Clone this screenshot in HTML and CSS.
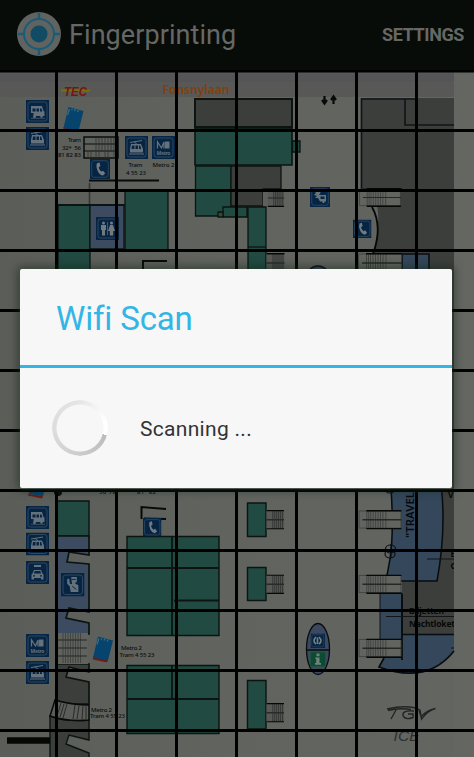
FILE: index.html
```html
<!DOCTYPE html>
<html lang="en">
<head>
<meta charset="utf-8">
<title>Fingerprinting</title>
<link rel="stylesheet" href="styles.css">
</head>
<body>
<header class="bar">
  <svg class="logo" viewBox="0 0 44 44">
    <circle cx="22" cy="22" r="22" fill="#60635f"/>
    <g fill="none" stroke="#195c79" stroke-width="2">
      <circle cx="22" cy="22" r="15"/>
      <path d="M22 1v6M22 37v6M1 22h6M37 22h6" stroke-width="2.4"/>
    </g>
    <circle cx="22" cy="22" r="8.5" fill="#124b64"/>
  </svg>
  <h1 class="title">Fingerprinting</h1>
  <button class="settings">SETTINGS</button>
</header>
<main>
<svg class="map" viewBox="0 70 474 687">
  <defs>
    <linearGradient id="paper"><stop offset="0" stop-color="#5b5d59"/><stop offset=".45" stop-color="#61635f"/><stop offset="1" stop-color="#636561"/></linearGradient>
    <symbol id="box" viewBox="0 0 23 23"><path fill="#062443" d="M0 0h23v23H0z"/><rect x="2" y="2" width="19" height="19" rx="2.5" fill="none" stroke="#3b5266" stroke-width=".8"/></symbol>
    <symbol id="bus" viewBox="0 0 23 23"><use href="#box"/><path fill="#65717b" d="M5 6h11l1.500 5 1 .5V16h-11v-3H5z"/><path fill="#062443" d="M6.500 8.500h3v3h-3zm4 0h2.500v3h-2.500zm3.500 0h1.500l.8 3H14z"/><circle cx="8.500" cy="16.500" r="1.500" fill="#65717b"/><circle cx="15.500" cy="16.500" r="1.200" fill="#65717b"/><path d="M5 18.300h14" stroke="#65717b" stroke-width=".6"/></symbol>
    <symbol id="tram" viewBox="0 0 23 23"><use href="#box"/><path d="M5 6.500L17 4.500M9 5.800l3 2.500" stroke="#65717b" stroke-width="1"/><path fill="#65717b" d="M6 8h10l2 5v3.500H5V13z"/><path fill="#062443" d="M7 9.500h2.500V13H6.500zm3.500 0H13V13h-2.500zm3.500 0h1.200l1 3.500H14z"/><path d="M4 18h15" stroke="#65717b"/></symbol>
    <symbol id="metro" viewBox="0 0 23 23"><use href="#box"/><path d="M5.500 12.500V6l4 6 2.500-6v6.500" fill="none" stroke="#65717b" stroke-width="1.300"/><path fill="#65717b" d="M13 5.500h4.500v7H13z"/><text x="4.500" y="18.500" font-size="5" font-weight="700" fill="#65717b" textLength="14">Metro</text></symbol>
    <symbol id="phone" viewBox="0 0 23 23"><use href="#box"/><path fill="#727b80" d="M8 5l3-1 1 4-2 1.500q.5 3 3 5l2-1 2.500 3-2.500 2.500q-4-.5-6-5Q6.500 9 8 5z"/></symbol>
    <symbol id="taxi" viewBox="0 0 23 23"><use href="#box"/><path fill="#65717b" d="M8 4h7v2H8zM8 9h7l1.500 3.500 1 1v5H15V17H8v1.500H5.500v-5l1-1z"/><path fill="#062443" d="M8.800 10h5.400l1 2.500H7.800zM7 14.200h2v1.200H7zm7 0h2v1.200h-2z"/></symbol>
    <symbol id="guard" viewBox="0 0 23 23"><use href="#box"/><path fill="#65717b" d="M10 4h5.500v4.500L13.500 10l3.500 2v6.500H9.500L8.500 13 6 10.500 6 6l2-.5.7 5L11 11l-.5-2z"/><path d="M11 13l4 3M10.500 6.300h4" stroke="#062443" stroke-width=".9"/></symbol>
    <symbol id="wc" viewBox="0 0 23 23"><use href="#box"/><g fill="#737a7d"><circle cx="7.500" cy="6" r="1.500"/><path d="M5 8h5v5H9v5.500H6V13H5z"/><circle cx="15.500" cy="6" r="1.500"/><path d="M14 8h3l2 6h-1.800v4.500h-3.400V14H12z"/></g><path d="M11.500 5v13" stroke="#65717b" stroke-width=".7"/></symbol>
    <symbol id="shuttle" viewBox="0 0 20 20"><use href="#box" width="20" height="20"/><path fill="#69747b" d="M4 4l3-1 1 2 2-1 .5 2L9 8h7v6.500h-1.500V16h-2v-1.500H10L8 11H5l2-2-3-1 2-2z"/><path d="M10.500 9.500h4v2.500h-4z" fill="#062443"/></symbol>
    <symbol id="steps" viewBox="0 0 18 20"><path fill="#575957" d="M0 0h18v20H0z"/><path d="M6.500 1v18M8.500 1v18M10.500 1v18M12.500 1v18M14.500 1v18M16.500 1v18" stroke="#2b2d2b" stroke-width=".8"/><path d="M0 10h18" stroke="#282b28" stroke-width="1.300"/><path d="M0 .7h18M0 19.300h18" stroke="#060806" stroke-width="1.400"/></symbol>
    <symbol id="stairs" viewBox="0 0 44 20"><path fill="#626460" stroke="#3c3e3c" stroke-width=".8" d="M.5 1h43v17.500H.5z"/><path d="M8.500 1v18M10.500 1v18M12.500 1v18M15 1v18M17.500 1v18M20 1v18M22.500 1v18M25 1v18M28 1v18" stroke="#343634" stroke-width=".7"/><path d="M4 10h40" stroke="#242824" stroke-width="1.300"/><path d="M8 .8h36M8 19.200h36" stroke="#060806" stroke-width="1.500"/></symbol>
    <symbol id="ticket" viewBox="0 0 22 26"><path fill="#6c1c17" d="M1 20l15 3-1 3L1 23z"/><path fill="#06446e" d="M6 0l15 4-5 20-15-3z"/><path d="M5 8l2-6M9 3l1-1M12 4l1-2M15 5l1-2" stroke="#397084" stroke-width="1.200"/></symbol>
  </defs>
  <path fill="url(#paper)" d="M0 70h474v687H0z"/>
  <path fill="#585957" d="M0 72h454v25H0z"/>
  <path fill="#555558" d="M0 74h454v8H0z"/>
  <path fill="#646662" d="M454 72h20v685h-20z"/>

  <!-- upper concourse -->
  <g stroke="#0b1411" stroke-width="1.300" fill="#214a42">
    <path fill="#3c3e3b" stroke-width="2" d="M195 99h97v28h-97z"/>
    <path stroke-width="1.600" d="M195 128h97v37h-97z"/>
    <path d="M292.500 141h7.500v11h-7.500z"/>
    <path d="M195.500 166H231v50h-35.500z"/>
    <path fill="#3c3e3b" d="M231 166h50v23h-18v17h-32z"/>
    <path d="M223 207h24v10h-24zM248 207h18v100h-18z"/>
    <path d="M218 212h5v5h-5z" fill="#304b35"/>
    <path d="M248 247h18"/>
    <path d="M58 205h32v90H58zM125 190h43v60h-43z"/>
    <path fill="#3c4b5f" d="M90 205h34v44H90z"/>
    <path d="M58 205h67" stroke-width="2.200"/>
  </g>
  <path fill="#3c3e3b" d="M361 98h93v400h-54V300h-39z"/>
  <path d="M361.500 190V99H418M405 99v26h49M361 189h41" fill="none" stroke="#10131a" stroke-width="1.600"/>
  <path fill="#61635f" d="M358 190h14.500q11.500 26 0 63v40H358z"/>
  <path d="M372 207q11 20 1 47" fill="none" stroke="#060806" stroke-width="1.800"/>
  <path d="M402 254h27v40h-27z" fill="#34475b" stroke="#080b10" stroke-width="1.500"/>
  <path fill="#5d605d" d="M263 189h18v17h-18z"/>
  <use href="#steps" x="267" y="189" width="18" height="18"/>
  <use href="#steps" x="266" y="253" width="19" height="20"/>
  <use href="#stairs" x="358" y="188" width="44" height="19"/>
  <use href="#stairs" x="358" y="253" width="44" height="20"/>
  <ellipse cx="318" cy="279" rx="12" ry="13" fill="#34475b" stroke="#0a0d12" stroke-width="1.300"/>
  <path d="M89 180.500h70M143 270v-9h24" fill="none" stroke="#080a08" stroke-width="2"/>
  <path d="M89.500 183v21" stroke="#343634" stroke-width="1.600"/>
  <path fill="#5f615d" stroke="#0a0c0a" stroke-width="1.500" d="M84 137h34v21H84z"/>
  <path d="M84 144h33M84 151h33" stroke="#0b0d0b"/>
  <path d="M96 138v20M99 138v20M102 138v13M105 138v20M108 138v20M111 138v13M114 138v20M88 151v7M91 151v7" stroke="#303230" stroke-width=".8"/>

  <path d="M61 90.500h29" stroke="#777008" stroke-width="2.200"/>
  <text x="64" y="95.500" class="tec" textLength="23" lengthAdjust="spacingAndGlyphs">TEC</text>
  <text x="162.500" y="94" class="street" textLength="67" lengthAdjust="spacingAndGlyphs">Fonsnylaan</text>
  <path d="M324.500 96v7M322 100l2.500 3.500 2.500-3.500M333.500 104v-7M331 100l2.500-3.500 2.500 3.500" fill="none" stroke="#080a08" stroke-width="2.200"/>
  <svg x="62.500" y="107" width="24" height="22"><use href="#ticket" width="22" height="26"/></svg>
  <use href="#bus" x="26" y="100" width="23" height="23"/>
  <use href="#tram" x="26" y="127" width="23" height="23"/>
  <use href="#tram" x="125" y="136" width="23" height="23"/>
  <use href="#metro" x="152" y="136" width="23" height="23"/>
  <use href="#phone" x="90" y="159" width="20" height="20"/>
  <use href="#wc" x="96" y="217" width="23" height="23"/>
  <use href="#shuttle" x="310" y="187" width="20" height="20"/>
  <use href="#phone" x="353" y="219.500" width="18.500" height="18.500"/>
  <g class="label">
    <text x="68" y="142" textLength="13">Tram</text>
    <text x="62" y="149.500" textLength="19" xml:space="preserve">32*  56</text>
    <text x="58" y="156.500" textLength="23">81 82 83</text>
    <text x="128.500" y="167" textLength="14">Tram</text>
    <text x="126" y="175" textLength="20">4 55 23</text>
    <text x="152.500" y="167" textLength="22">Metro 2</text>
    <text x="99" y="494" textLength="17">30 78</text>
    <text x="137" y="493.500" textLength="19" xml:space="preserve">81  82</text>
    <text x="121" y="650" textLength="21">Metro 2</text>
    <text x="119.500" y="656.500" textLength="35">Tram 4 55 23</text>
    <text x="91" y="711.500" textLength="21">Metro 2</text>
    <text x="90" y="718" textLength="35">Tram 4 55 23</text>
  </g>

  <!-- lower concourse -->
  <g stroke="#0b1411" stroke-width="1.400" fill="#214a42">
    <path d="M57 501h32v35H57z"/>
    <path d="M127 536.500h92v99h-92zM127 665.500h92v68h-92z"/>
    <path d="M127 568h92M172 537v98M174 600.500h45M127 699h92M172 666v32" stroke-width="1.800"/>
    <path d="M247.500 503H266v33.500h-18.500zM247.500 567.500H266v33h-18.500zM247.500 680.500H266V729h-18.500z"/>
    <path fill="#3c4b5f" stroke-width="1.700" d="M57 536h32v19l-20-3-2 10 22 2v48l-20-4-3 10 23 5v11H57z"/>
    <path fill="#3c3e3b" stroke-width="1.700" d="M57 664h32v8l-20-5-3 10 23 5v22q-19 1-32-3z"/>
    <path fill="#3c3e3b" d="M50 716q15 6 39 4v20l-20-5-3 9 23 9v10H50z"/>
  </g>
  <path fill="#60625e" d="M57 633h31v31H57z"/>
  <path d="M63 633v30M65.500 633v30M68 633v30M70.500 633v30M73 633v30M75.500 633v30M78 633v30M80.500 633v30" stroke="#3b3d3b" stroke-width=".8"/>
  <path d="M58 640h29M58 648h29M58 656h29" stroke="#242624" stroke-width="1.200"/>
  <path d="M55 700l-5 16q18 6 39 4v-15q-18 0-34-5z" fill="#5b5d5a" stroke="#080a08" stroke-width="1.500"/>
  <path d="M61 703l-4 13M64 704l-4 13M67 704l-4 14M75 705l-2 14M79 706l-2 13M83 706l-1 13M86 706v13" stroke="#1c1e1c" stroke-width=".8"/>
  <path d="M7 740.500h43" stroke="#060806" stroke-width="6.500"/>
  <use href="#steps" x="266" y="510" width="18.500" height="19.500"/>
  <use href="#steps" x="266" y="574.500" width="18.500" height="19.500"/>
  <use href="#steps" x="266" y="703" width="18.500" height="19.500"/>
  <path d="M141.500 519v-12l24.500 2M144 518.500l22 .5" fill="none" stroke="#080a08" stroke-width="2"/>
  <path fill="#06446e" d="M28 488h17l-2 8-14-2z"/><path fill="#6c1c17" d="M28 494l15 2-1 2.500-14-3z"/>
  <circle cx="58" cy="492" r="4" fill="#080a08"/>
  <use href="#bus" x="26" y="506" width="23" height="23"/>
  <use href="#tram" x="26" y="532.500" width="23" height="23"/>
  <use href="#taxi" x="26" y="561" width="23" height="23"/>
  <use href="#guard" x="61" y="573" width="23.500" height="23.500"/>
  <use href="#metro" x="26" y="634" width="23" height="23"/>
  <use href="#tram" x="26" y="661" width="23" height="23"/>
  <use href="#phone" x="143" y="518" width="18.500" height="18.500"/>
  <use href="#ticket" x="92" y="636.500" width="22" height="26"/>
  <ellipse cx="318" cy="649" rx="11.500" ry="25.500" fill="#3a495f" stroke="#0a0c0e" stroke-width="1.300"/>
  <use href="#box" x="310.500" y="633.500" width="14.500" height="14.500"/>
  <path d="M316 637q-4 4 0 7M319 637q4 4 0 7M317.500 637.500v6.500" fill="none" stroke="#78817f" stroke-width="1.600"/>
  <path d="M306.500 650h23" stroke="#0a0c0e" stroke-width="1.500"/>
  <path fill="#0d4a33" stroke="#24583f" stroke-width=".7" d="M310.500 652h15v14.500h-15z"/>
  <path fill="#72817a" d="M316.500 653.500h3v2.700h-3zM315.500 657.500h4v5.500h1.500v1.700h-6V663h1.200v-4h-1z"/>

  <!-- travel centre -->
  <path fill="#3c3e3b" d="M402 488h52v148h-52z"/>
  <path d="M391 488q3 45-1 71l-4 22h51q9-48 4.500-93z" fill="#34475b" stroke="#080b10" stroke-width="1.500"/>
  <path d="M380 593h22v47h-22z" fill="#34475b" stroke="#101318"/>
  <path d="M454 651q-27 34-75 16l5-9h18v-23h52z" fill="#34475b"/>
  <path d="M454 651q-27 34-75 16l5-9M402 634.500h52" fill="none" stroke="#080b10" stroke-width="1.700"/>
  <path d="M402 594v66" stroke="#080a08" stroke-width="1.700"/>
  <use href="#stairs" x="358" y="510" width="44" height="19.500"/>
  <use href="#stairs" x="358" y="574.500" width="44" height="19.500"/>
  <use href="#stairs" x="358" y="638.500" width="44" height="19.500"/>
  <path d="M427 559h27M386 616.500h68M451 648h3" stroke="#11151a" stroke-width="1.200"/>
  <g fill="none" stroke="#0c1016" stroke-width="1.200"><ellipse cx="390.500" cy="549" rx="5" ry="4"/><ellipse cx="390" cy="554" rx="5" ry="4"/><path d="M391 544v14"/><ellipse cx="390" cy="489" rx="5" ry="4"/></g>
  <text class="travel" transform="translate(414 538) rotate(-90)" textLength="46" lengthAdjust="spacingAndGlyphs">"TRAVEL</text>
  <svg x="402" y="480" width="52" height="160" viewBox="402 480 52 160" class="booth">
    <text x="448" y="498">V</text><text x="450.500" y="557">B</text><text x="450.500" y="569">C</text>
    <text x="409" y="614" textLength="35">Biljetten</text>
    <text x="409" y="626.500" textLength="46">Nachtloket</text>
  </svg>
  <path d="M388 710.500q11-3 23-1M396 710l-5 9M414 711q-12-1-11 4.500 2 5 10 2v-3.500h-5M387 709q22-5 33 1l1.500 9q7-9 14-10.500-7 1-14.500 8l-2-6" fill="none" stroke="#222523" stroke-width="1.400"/>
  <text x="393.500" y="741" class="ice" textLength="26">ICE</text>

  <!-- measuring grid -->
  <path d="M56.500 70v687M116.500 70v687M176.500 70v687M236.500 70v687M296.500 70v687M356.500 70v687M416.500 70v687M0 71h474M0 130.500h474M0 190.500h474M0 250.500h474M0 310.500h474M0 370.500h474M0 430.500h474M0 490.500h474M0 550.500h474M0 610.500h474M0 670.500h474M0 730.500h474" stroke="#000" stroke-width="3"/>
</svg>
</main>
<section class="dialog" role="dialog">
  <h2 class="heading">Wifi Scan</h2>
  <div class="body">
    <div class="spinner"></div>
    <p class="message">Scanning ...</p>
  </div>
</section>
</body>
</html>
```
FILE: styles.css
```css
* { box-sizing: border-box; }
body {
  margin: 0;
  width: 474px;
  height: 757px;
  overflow: hidden;
  position: relative;
  background: #646662;
  font-family: Roboto, "Liberation Sans", sans-serif;
}
.bar {
  height: 70px;
  display: flex;
  align-items: center;
  padding: 0 10px 2px 17px;
  background: #080c08;
}
.logo { width: 44px; height: 44px; }
.title {
  margin: 2px 0 0 8px;
  font-size: 27px;
  font-weight: 400;
  line-height: 36px;
  letter-spacing: .07px;
  color: #666866;
}
.settings {
  margin: 0 0 0 auto;
  padding: 0;
  border: 0;
  background: none;
  font: 700 18px Roboto, "Liberation Sans", sans-serif;
  letter-spacing: -.4px;
  color: #666866;
}
.map {
  display: block;
  width: 474px;
  height: 687px;
  font-family: "Noto Sans", sans-serif;
}
.label { font-size: 6px; font-weight: 500; fill: #0b0d0b; }
.tec { font: italic 700 12.5px "Liberation Sans", sans-serif; fill: #771510; }
.street { font-size: 12.5px; font-weight: 600; fill: #804008; }
.travel { font-size: 11px; font-weight: 600; fill: #06090d; }
.booth { font-size: 8.5px; font-weight: 700; fill: #060806; }
.ice { font: italic 15.5px "Liberation Sans", sans-serif; fill: #2d302e; }
.dialog {
  position: absolute;
  left: 20px;
  top: 269px;
  width: 432px;
  height: 219px;
  background: #f7f7f7;
  border-radius: 2px;
  box-shadow: 0 0 9px 3px rgba(20, 40, 22, .5), 0 1px 1px #777;
}
.heading {
  margin: 0;
  height: 99px;
  padding-left: 36px;
  border-bottom: 3px solid #33b5e5;
  font-size: 33px;
  font-weight: 400;
  line-height: 100px;
  letter-spacing: -.15px;
  color: #33b5e5;
}
.body {
  height: 120px;
  display: flex;
  align-items: center;
  padding-left: 32px;
}
.spinner {
  width: 56px;
  height: 56px;
  border-radius: 50%;
  background: conic-gradient(from 105deg, #bdbbbd, #cdcbcd 75deg, #dcdadc 150deg, #e7e4e7 255deg, #f4f2f4 290deg, #fff 330deg, #fff);
  -webkit-mask: radial-gradient(closest-side, transparent 23px, #000 24px);
  mask: radial-gradient(closest-side, transparent 23px, #000 24px);
}
.message {
  margin: 1px 0 0 32px;
  font-size: 21px;
  letter-spacing: .3px;
  color: #333;
}
```
